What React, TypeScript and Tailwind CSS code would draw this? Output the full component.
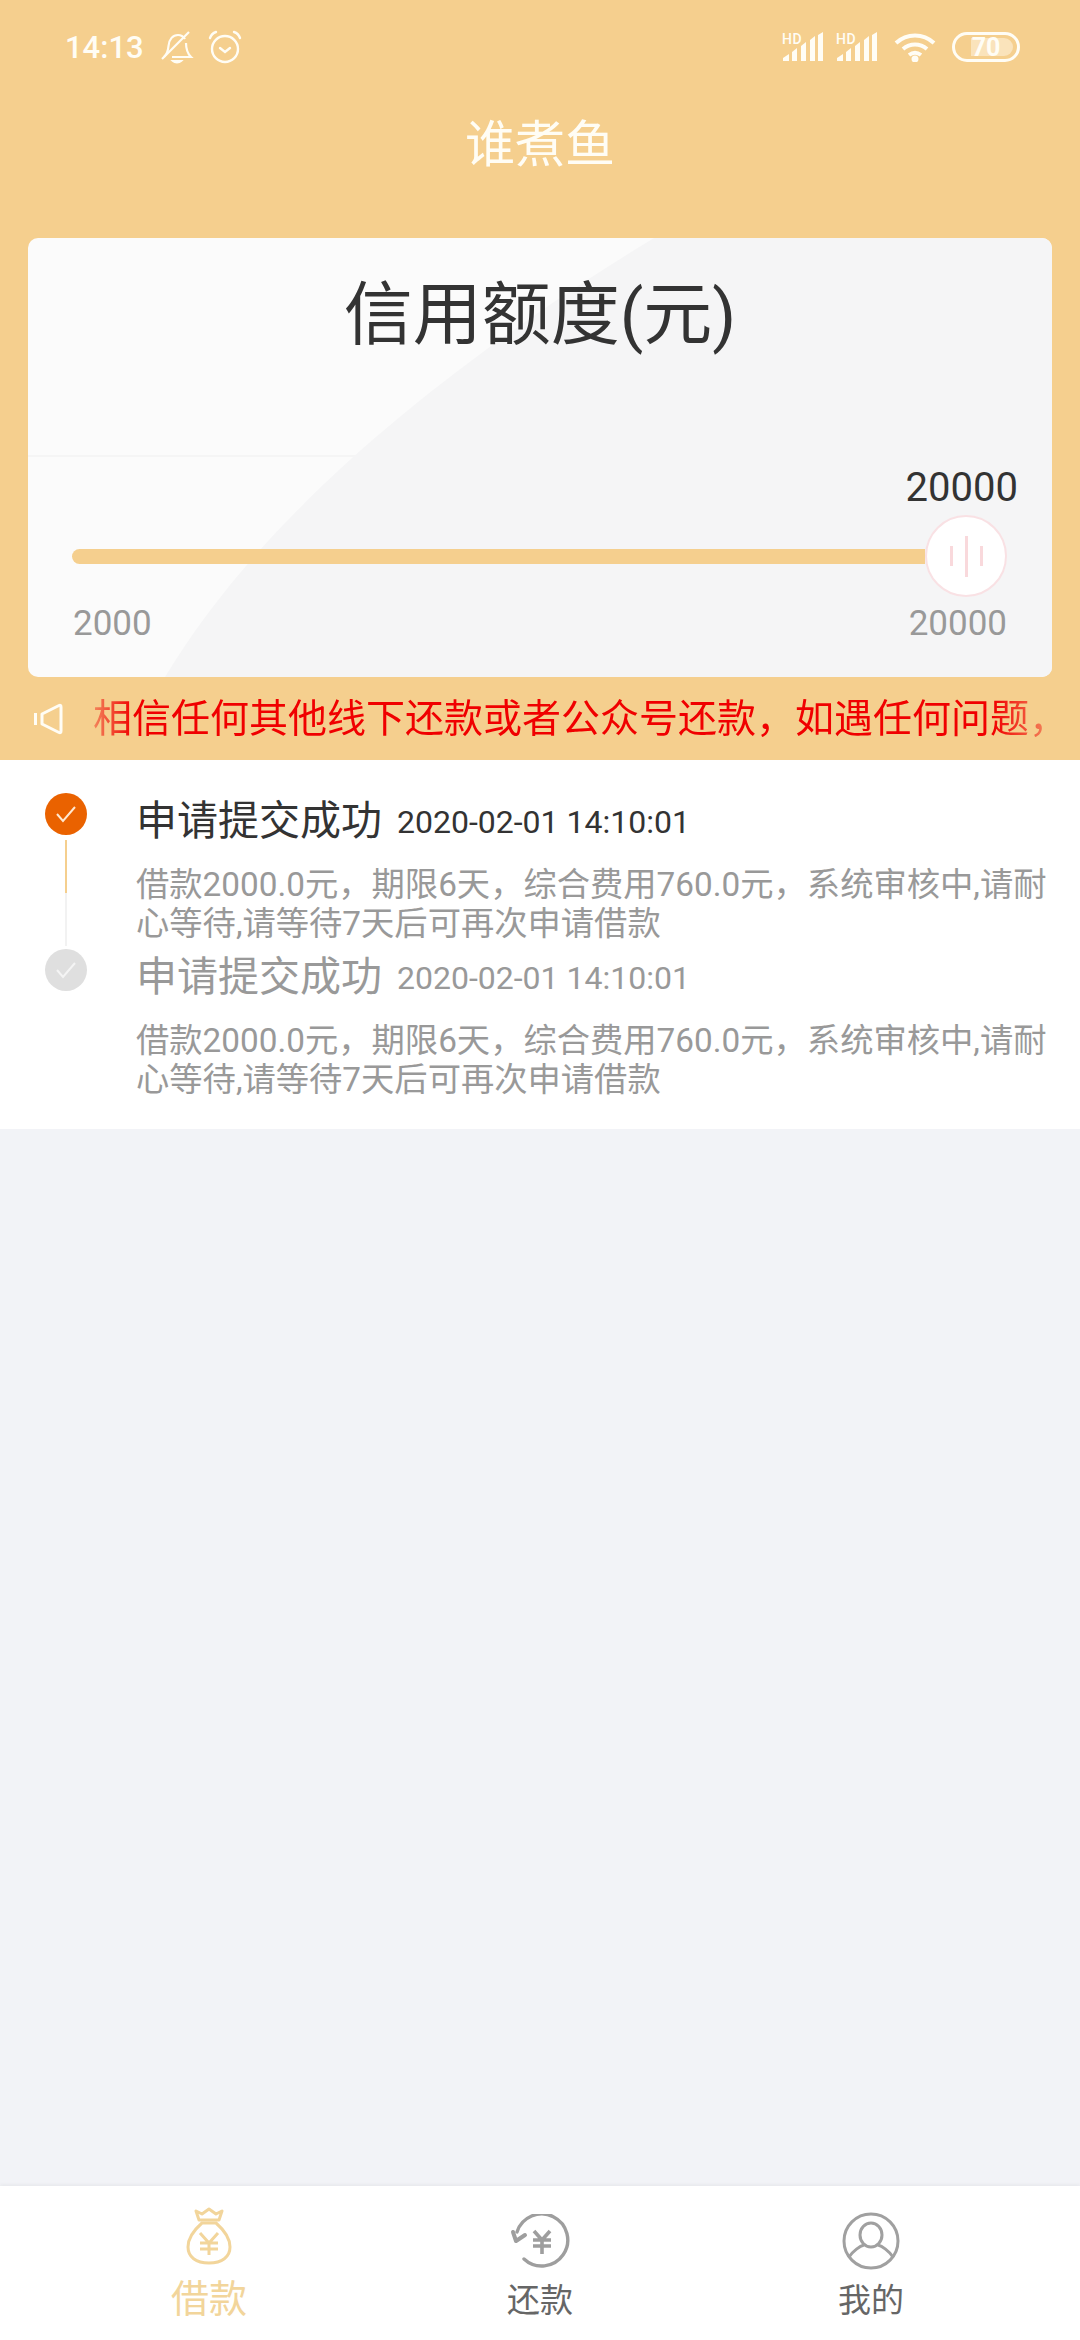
const FONT = "font-['Roboto','Noto_Sans_CJK_SC',sans-serif]";

const steps = [
  { done: true, title: "申请提交成功", date: "2020-02-01 14:10:01" },
  { done: false, title: "申请提交成功", date: "2020-02-01 14:10:01" },
];

const DESC = "借款2000.0元，期限6天，综合费用760.0元，系统审核中,请耐心等待,请等待7天后可再次申请借款";

function SignalIcon() {
  return (
    <div className="relative h-[30px] w-[42px]">
      <svg width="42" height="30" viewBox="0 0 42 30" fill="#fffdf5">
        <path d="M1 29v-3l6-4v7zM10 29v-9l5-4v13zM19 29V14l5-4v19zM28 29V8l5-4v25zM36 29V3l5-3v29z" />
      </svg>
      <span className="absolute left-0 top-0 text-[14px] font-medium leading-[14px] tracking-[0.5px]">HD</span>
    </div>
  );
}

function StatusBar() {
  return (
    <div className="flex h-[94px] items-center justify-between pl-[65px] pr-[60px] text-[#fffdf5]">
      <div className="flex items-center">
        <span className="w-[95px] text-[31px] font-medium leading-none">14:13</span>
        <svg width="34" height="34" viewBox="0 0 34 34" fill="none" stroke="#fffdf5" strokeWidth="2.2">
          <path d="M4 27c3-3 4-5 4.500-11C9 9 13 5 18 5c3 0 5 1 7 4M26 13c0 6 1 10 5 14H12" />
          <path d="M2 29L29 2" />
          <path d="M13 31c2 2 6 2 8 0z" fill="#fffdf5" />
        </svg>
        <svg className="ml-[14px]" width="34" height="34" viewBox="0 0 34 34" fill="none" stroke="#fffdf5" strokeWidth="2.4">
          <circle cx="17" cy="19" r="13" />
          <path d="M12 18l5 4 5-4M2 8c1-3 3-5 6-6M32 8c-1-3-3-5-6-6" strokeLinecap="round" />
        </svg>
      </div>
      <div className="flex items-center">
        <SignalIcon />
        <span className="ml-[12px]"><SignalIcon /></span>
        <svg className="ml-[16px]" width="42" height="30" viewBox="0 0 42 30" fill="none" stroke="#fffdf5" strokeWidth="4">
          <path d="M2 11c11-10 27-10 38 0M9 17c7-6 17-6 24 0M15 23c4-3 8-3 12 0" />
          <circle cx="21" cy="27" r="1.500" fill="#fffdf5" />
        </svg>
        <div className="relative ml-[16px] flex h-[30px] w-[68px] items-center justify-center rounded-full border-[3px] border-[#fffdf5]">
          <div className="absolute left-[16px] top-[3px] h-[18px] w-[42px] rounded-r-full bg-[#fae3bb]" />
          <span className="relative text-[25px] font-bold leading-none">70</span>
        </div>
      </div>
    </div>
  );
}

function CreditCard() {
  return (
    <div className="relative mx-[28px] h-[439px] overflow-hidden rounded-[10px] bg-[#fbfbfb]">
      <svg className="absolute inset-0" width="1024" height="439" viewBox="0 0 1024 439">
        <path d="M0 218H330" stroke="#f5f5f5" strokeWidth="2" />
        <path d="M626 0C470 95 250 250 137 439H1024V0Z" fill="#f5f5f6" />
      </svg>
      <div className="relative flex h-full flex-col">
        <h1 className="mt-[41px] text-center text-[69px] leading-[74px] text-[#333333]">信用额度(元)</h1>
        <p className="mt-[112px] pr-[34px] text-right text-[40px] leading-[46px] text-[#333333]">20000</p>
        <div className="relative mt-[4px] flex h-[82px] items-center pl-[44px] pr-[45px]">
          <div className="h-[15px] w-[854px] rounded-l-full bg-[#f5cf8e]" />
          <div className="relative flex h-[82px] w-[82px] shrink-0 items-center justify-center gap-[12px] rounded-full border-2 border-[#f9e1e4] bg-white">
            <span className="h-[20px] w-[3px] bg-[#f9d9dc]" />
            <span className="h-[41px] w-[3px] bg-[#f9d9dc]" />
            <span className="h-[20px] w-[3px] bg-[#f9d9dc]" />
          </div>
        </div>
        <div className="mt-[5px] flex justify-between pl-[45px] pr-[45px] text-[35px] leading-[44px] text-[#999999]">
          <span>2000</span>
          <span>20000</span>
        </div>
      </div>
    </div>
  );
}

function Notice() {
  return (
    <div className="flex h-[83px] items-center pl-[33px]">
      <svg width="30" height="34" viewBox="0 0 30 34" fill="none" stroke="#fffdf5" strokeWidth="3" strokeLinejoin="round">
        <rect x="1" y="11" width="3" height="12" fill="#fffdf5" stroke="none" />
        <path d="M9 12L26 3.500Q28 2.500 28 5V29Q28 31.500 26 30.500L9 22Z" />
      </svg>
      <div className="ml-[30px] w-[959px] whitespace-nowrap text-[39px] leading-[50px] text-[#f00000] [mask-image:linear-gradient(90deg,rgba(0,0,0,0.35),#000_40px,#000_900px,rgba(0,0,0,0.3))]">
        相信任何其他线下还款或者公众号还款，如遇任何问题，
      </div>
    </div>
  );
}

function Timeline() {
  return (
    <div className="bg-white pb-[27px] pt-[30px]">
      {steps.map((s, i) => (
        <div key={i} className="flex h-[156px]">
          <div className="flex w-[136px] shrink-0 flex-col items-center pr-[4px] pt-[3px]">
            <div className={`flex h-[42px] w-[42px] items-center justify-center rounded-full ${s.done ? "bg-[#ea6200]" : "bg-[#dfdfdf]"}`}>
              <svg width="24" height="20" viewBox="0 0 24 20" fill="none" stroke={s.done ? "#ffe8d0" : "#f4f4f4"} strokeWidth="2">
                <path d="M3 10l6 7L21 3" />
              </svg>
            </div>
            {s.done && (
              <div className="mt-[5px] flex h-[106px] w-[2px] flex-col">
                <div className="h-[53px] bg-[#f5cf8e]" />
                <div className="h-[53px] bg-[#f2f2f2]" />
              </div>
            )}
          </div>
          <div className="min-w-0 flex-1 pr-[30px]">
            <div className={`flex h-[60px] items-center pt-[3px] ${s.done ? "text-[#333333]" : "text-[#999999]"}`}>
              <span className="text-[41px]">{s.title}</span>
              <span className="ml-[15px] text-[32px]">{s.date}</span>
            </div>
            <p className="mt-[15px] text-[33.3px] leading-[39px] text-[#999999]">{DESC}</p>
          </div>
        </div>
      ))}
    </div>
  );
}

function BagIcon() {
  return (
    <svg width="46" height="58" viewBox="0 0 46 58" fill="none" stroke="#f2d59b" strokeWidth="3">
      <path d="M10 4l6 3 7-5 7 5 6-3-3 9H13z" strokeLinejoin="round" />
      <path d="M15 16h16M16 16C8 23 2 31 2 40c0 10 8 16 21 16s21-6 21-16c0-9-6-17-14-24" />
      <path d="M14 26l9 10 9-10M14 36h18M14 42h18M23 36v12" />
    </svg>
  );
}

function RepayIcon() {
  return (
    <svg width="60" height="56" viewBox="0 0 60 56" fill="none" stroke="#9e9e9e" strokeWidth="3.400">
      <path d="M7 18A26 26 0 1 1 14 45" strokeLinecap="round" />
      <path d="M3 18l3 9 9-6" strokeWidth="4" strokeLinecap="round" strokeLinejoin="round" />
      <path d="M24 17l8 9 8-9M23 26h18M23 32h18M32 26v14" strokeWidth="3.600" />
    </svg>
  );
}

function UserIcon() {
  return (
    <svg width="58" height="58" viewBox="0 0 58 58" fill="none" stroke="#a0a0a0" strokeWidth="3">
      <circle cx="29" cy="29" r="27" />
      <ellipse cx="29" cy="23" rx="11" ry="12" />
      <path d="M7 45c4-6 11-11 15-12M51 45c-4-6-11-11-15-12" />
    </svg>
  );
}

function TabBar() {
  return (
    <div className="grid h-[154px] grid-cols-[repeat(3,331px)] justify-center bg-white shadow-[0_-2px_3px_rgba(0,0,0,0.04)]">
      <div className="flex flex-col items-center pt-[21px]">
        <BagIcon />
        <span className="mt-[9px] text-[38px] leading-[50px] text-[#f2d59b]">借款</span>
      </div>
      <div className="flex flex-col items-center pt-[28px]">
        <RepayIcon />
        <span className="mt-[6px] text-[33px] leading-[50px] text-[#666666]">还款</span>
      </div>
      <div className="flex flex-col items-center pt-[26px]">
        <UserIcon />
        <span className="mt-[6px] text-[33px] leading-[50px] text-[#666666]">我的</span>
      </div>
    </div>
  );
}

export default function App() {
  return (
    <div className={`flex h-[2340px] w-[1080px] flex-col overflow-hidden bg-[#f2f3f7] ${FONT}`}>
      <div className="bg-[#f5cf8e]">
        <StatusBar />
        <div className="h-[144px] pt-[23px] text-center text-[50px] leading-[56px] text-[#fffdf5]">谁煮鱼</div>
        <CreditCard />
        <Notice />
      </div>
      <Timeline />
      <div className="flex-1" />
      <TabBar />
    </div>
  );
}
